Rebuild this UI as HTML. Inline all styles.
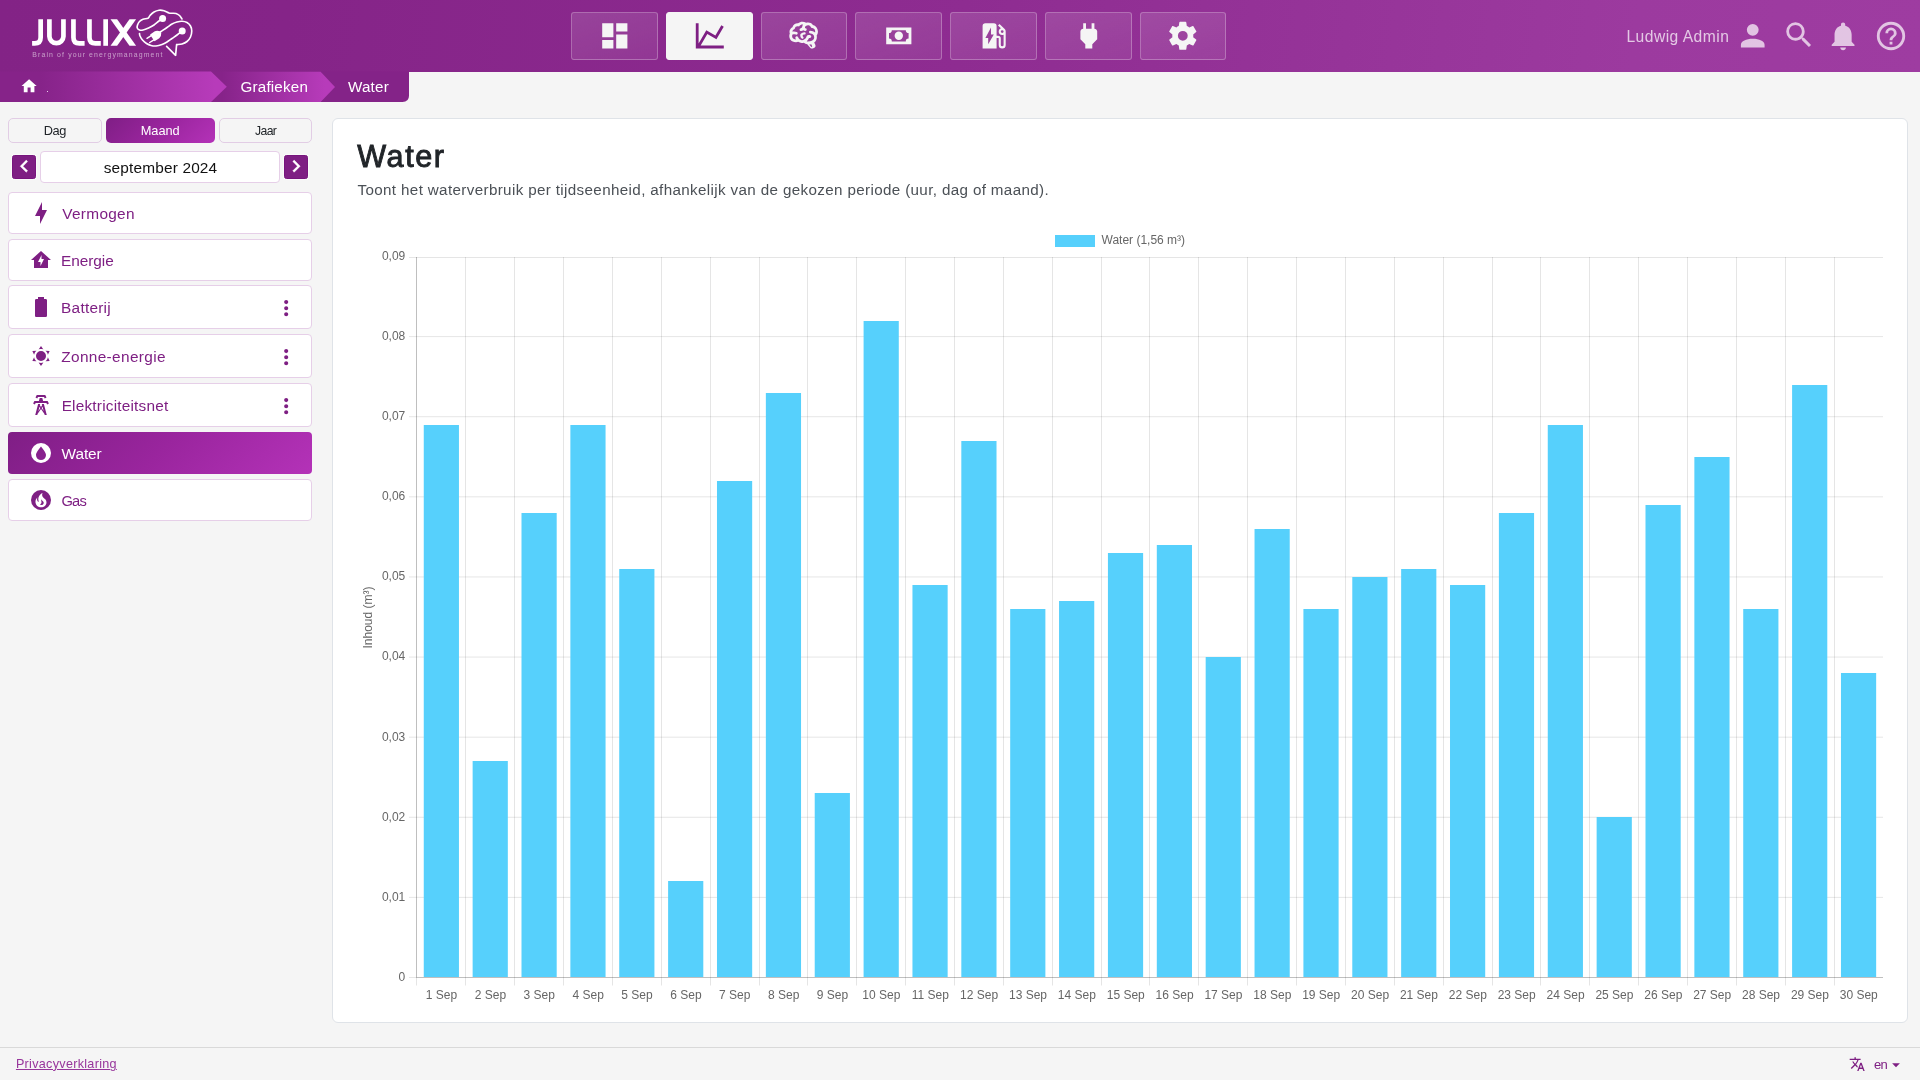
<!DOCTYPE html>
<html><head><meta charset="utf-8"><title>Water</title>
<style>
*{box-sizing:border-box;margin:0;padding:0}
html,body{width:1920px;height:1080px;overflow:hidden;background:#f5f5f5;font-family:"Liberation Sans",sans-serif;}
.abs{position:absolute}
svg{overflow:visible}
#hdr{position:absolute;left:0;top:0;width:1920px;height:72px;background:linear-gradient(97deg,#832386 0%,#852488 15%,#8e2c91 50%,#9c3a9f 85%,#9e3ca1 100%);}
.nb{position:absolute;top:12px;height:48px;border:1px solid rgba(255,255,255,0.25);border-radius:3px;background:linear-gradient(160deg,rgba(255,255,255,0.13),rgba(255,255,255,0.07));}
.nb.act{background:#f5f5f5;border-color:#f5f5f5}
.ct{font-family:"Liberation Sans",sans-serif;font-size:12px;fill:#666}
.tx{position:absolute;white-space:nowrap;line-height:1.149;}
.tb{position:absolute;top:118px;height:25px;border:1px solid #e2cde5;border-radius:5px;background:#f5f5f5;}
.mi{position:absolute;left:8px;width:304px;border:1px solid #e6cfe8;border-radius:4px;background:#fff;}
.mi.act{background:linear-gradient(135deg,#7f1e85 0%,#9a259e 50%,#b432b8 100%);border:0;}
</style></head><body>
<div id="hdr"></div>
<svg class="abs" style="left:0;top:0" width="220" height="72" viewBox="0 0 220 72">
<g fill="none" stroke="#fff" stroke-width="4.7">
<path d="M40.65,19.25 V37.5 Q40.65,43.45 34.7,43.45 H32.1"/>
<path d="M49.4,19.25 V36.4 A7.03,7.03 0 0 0 63.45,36.4 V19.25"/>
<path d="M73.45,19.25 V37.5 Q73.45,43.45 79.4,43.45 H84.6"/>
<path d="M89.45,19.25 V37.5 Q89.45,43.45 95.4,43.45 H100.8"/>
<path d="M105.65,19.25 V45.8"/>
</g>
<path fill="#fff" d="M110.5,19.25 H117.1 L136.1,45.8 H129.5Z"/><path fill="#fff" d="M136.1,19.25 H129.5 L110.5,45.8 H117.1Z"/>
<g fill="none" stroke="#fff" stroke-width="1.65" stroke-linecap="round" stroke-linejoin="round">
<path d="M162.50,18.50 C161.92,18.92 160.42,19.92 159.00,21.00 C157.58,22.08 155.75,23.83 154.00,25.00 C152.25,26.17 150.33,27.17 148.50,28.00 C146.67,28.83 144.50,29.67 143.00,30.00 C141.50,30.33 140.46,30.33 139.50,30.00 C138.54,29.67 137.58,28.83 137.25,28.00 C136.92,27.17 137.12,26.08 137.50,25.00 C137.88,23.92 138.58,22.46 139.50,21.50 C140.42,20.54 141.58,19.79 143.00,19.25 C144.42,18.71 146.83,18.88 148.00,18.25 C149.17,17.62 149.00,16.54 150.00,15.50 C151.00,14.46 152.50,12.88 154.00,12.00 C155.50,11.12 157.33,10.46 159.00,10.25 C160.67,10.04 162.33,10.29 164.00,10.75 C165.67,11.21 167.67,12.58 169.00,13.00 C170.33,13.42 170.83,13.17 172.00,13.25 C173.17,13.33 174.75,13.12 176.00,13.50 C177.25,13.88 178.50,14.58 179.50,15.50 C180.50,16.42 181.58,18.42 182.00,19.00"/>
<path d="M158.00,33.50 C158.50,33.17 159.50,32.50 161.00,31.50 C162.50,30.50 165.17,28.75 167.00,27.50 C168.83,26.25 170.33,24.92 172.00,24.00 C173.67,23.08 175.33,22.46 177.00,22.00 C178.67,21.54 180.33,21.17 182.00,21.25 C183.67,21.33 185.58,21.71 187.00,22.50 C188.42,23.29 189.71,24.58 190.50,26.00 C191.29,27.42 191.75,29.17 191.75,31.00 C191.75,32.83 191.29,35.25 190.50,37.00 C189.71,38.75 188.42,40.33 187.00,41.50 C185.58,42.67 183.67,43.48 182.00,44.00 C180.33,44.52 177.83,44.50 177.00,44.60"/>
<path d="M176.6,44.6 L175.6,55.3 L166.6,46.4"/>
<path d="M182.00,31.00 C181.17,31.67 178.67,33.75 177.00,35.00 C175.33,36.25 173.67,37.33 172.00,38.50 C170.33,39.67 168.67,41.00 167.00,42.00 C165.33,43.00 163.83,43.83 162.00,44.50 C160.17,45.17 157.83,45.83 156.00,46.00 C154.17,46.17 152.58,45.92 151.00,45.50 C149.42,45.08 147.92,44.42 146.50,43.50 C145.08,42.58 143.58,41.25 142.50,40.00 C141.42,38.75 140.50,37.08 140.00,36.00 C139.50,34.92 139.58,33.92 139.50,33.50"/>
</g>
<circle cx="162.6" cy="18.6" r="3.5" fill="#fff"/>
<circle cx="182.2" cy="31" r="3.5" fill="#fff"/>
<g transform="translate(156.4,35.2) rotate(-33)" fill="#fff" stroke="none">
<path d="M-4.4,-4.1 H0.8 Q3.6,-3.8 5.2,-0.9 V0.9 Q3.6,3.8 0.8,4.1 H-4.4 Q-5,4.1 -5,3.5 V-3.5 Q-5,-4.1 -4.4,-4.1Z"/>
<path d="M-4.6,-2.5 H-9.6 M-4.6,2.5 H-9.6" stroke="#fff" stroke-width="1.4" stroke-linecap="round"/>
</g>
</svg>
<div class="nb" style="left:571px;width:87px"></div>
<svg class="abs" style="left:597.70px;top:18.80px" width="33.6" height="33.6" viewBox="0 0 24 24"><path fill="#f5f5f5" fill-rule="evenodd" d="M3 13h8V3H3v10zm0 8h8v-6H3v6zm10 0h8V11h-8v10zm0-18v6h8V3h-8z"/></svg>
<div class="nb act" style="left:666px;width:87px"></div>
<svg class="abs" style="left:692.70px;top:18.80px" width="33.6" height="33.6" viewBox="0 0 24 24"><path fill="#7e1f83" fill-rule="evenodd" d="M16,11.78L20.24,4.45L21.97,5.45L16.74,14.5L10.23,10.75L5.46,19H22V21H2V3H4V17.54L9.5,8L16,11.78Z"/></svg>
<div class="nb" style="left:761px;width:86px"></div>
<svg class="abs" style="left:787.20px;top:18.80px" width="33.6" height="33.6" viewBox="0 0 24 24"><path fill="#f5f5f5" fill-rule="evenodd" d="M21.33,12.91C21.42,14.46 20.71,15.95 19.44,16.86L20.21,18.35C20.44,18.8 20.47,19.33 20.27,19.8C20.08,20.27 19.69,20.64 19.21,20.8L18.42,21.05C18.25,21.11 18.06,21.14 17.88,21.14C17.37,21.14 16.89,20.91 16.56,20.5L14.44,18C13.55,17.85 12.71,17.47 12,16.9C11.5,17.05 11,17.13 10.5,17.13C9.62,17.13 8.74,16.86 8,16.34C7.47,16.5 6.93,16.57 6.38,16.56C5.59,16.57 4.81,16.41 4.08,16.11C2.65,15.47 1.7,14.07 1.65,12.5C1.57,11.78 1.69,11.05 2,10.39C1.71,9.64 1.68,8.82 1.93,8.06C2.3,7.11 3,6.32 3.87,5.82C4.45,4.13 6.08,3 7.87,3.12C9.47,1.62 11.92,1.46 13.7,2.75C14.12,2.64 14.56,2.58 15,2.58C16.36,2.55 17.65,3.15 18.5,4.22C20.54,4.75 22,6.57 22.08,8.69C22.13,9.8 21.83,10.89 21.22,11.82C21.29,12.18 21.33,12.54 21.33,12.91M16.33,11.5C16.9,11.57 17.35,12 17.35,12.57A1,1 0 0,1 16.35,13.57H15.72C15.4,14.47 14.84,15.26 14.1,15.86C14.35,15.95 14.61,16 14.87,16.07C20,16 19.4,12.87 19.4,12.82C19.34,11.39 18.14,10.27 16.71,10.33A1,1 0 0,1 15.71,9.33A1,1 0 0,1 16.71,8.33C17.94,8.36 19.12,8.82 20.04,9.63C20.09,9.34 20.12,9.04 20.12,8.74C20.06,7.5 19.5,6.42 17.25,6.21C16,3.25 12.85,4.89 12.85,5.81V5.81C12.82,6.04 13.06,6.53 13.1,6.56A1,1 0 0,1 14.1,7.56C14.1,8.11 13.65,8.56 13.1,8.56V8.56C12.57,8.54 12.07,8.34 11.67,8C11.19,8.31 10.64,8.5 10.07,8.56V8.56C9.5,8.61 9.03,8.21 9,7.66C8.92,7.1 9.33,6.61 9.88,6.56C10.04,6.54 10.82,6.42 10.82,5.79V5.79C10.82,5.13 11.07,4.5 11.5,4C10.58,3.75 9.59,4.08 8.59,5.29C6.75,5 6,5.25 5.45,7.2C4.5,7.67 4,8 3.78,9C4.86,8.78 5.97,8.87 7,9.25C7.5,9.44 7.78,10 7.59,10.54C7.4,11.06 6.82,11.32 6.3,11.13C5.57,10.81 4.75,10.79 4,11.07C3.68,11.34 3.68,11.9 3.68,12.34C3.68,13.08 4.05,13.77 4.68,14.17C5.21,14.44 5.8,14.58 6.39,14.57C6.24,14.31 6.11,14.04 6,13.76C5.81,13.22 6.1,12.63 6.64,12.44C7.18,12.25 7.77,12.54 7.96,13.08C8.36,14.22 9.38,15 10.58,15.13C11.95,15.06 13.17,14.25 13.77,13C14,11.62 15.11,11.5 16.19,11.48M18,19.4L17.31,18C16.84,18.11 16.36,18.2 15.88,18.2L17.5,20.1L18,19.4Z"/><path d="M12.5,10.3 Q10.2,10.6 10.3,11.8 Q10.3,12.8 11,13.3" fill="none" stroke="#f5f5f5" stroke-width="1.7" stroke-linecap="round"/></svg>
<div class="nb" style="left:855px;width:87px"></div>
<svg class="abs" style="left:881.70px;top:18.80px" width="33.6" height="33.6" viewBox="0 0 24 24"><path fill="#f5f5f5" fill-rule="evenodd" d="M3,6H21V18H3V6M12,9A3,3 0 0,1 15,12A3,3 0 0,1 12,15A3,3 0 0,1 9,12A3,3 0 0,1 12,9M7,8A2,2 0 0,1 5,10V14A2,2 0 0,1 7,16H17A2,2 0 0,1 19,14V10A2,2 0 0,1 17,8H7Z"/></svg>
<div class="nb" style="left:950px;width:87px"></div>
<svg class="abs" style="left:976.70px;top:18.80px" width="33.6" height="33.6" viewBox="0 0 24 24"><path fill="#f5f5f5" fill-rule="evenodd" d="M19.77,7.23L19.78,7.22L16.06,3.5L15,4.56L17.11,6.67C16.17,7.03 15.5,7.93 15.5,9A2.5,2.5 0 0,0 18,11.5C18.36,11.5 18.69,11.42 19,11.29V18.5A1,1 0 0,1 18,19.5A1,1 0 0,1 17,18.5V14A2,2 0 0,0 15,12H14V5A2,2 0 0,0 12,3H6A2,2 0 0,0 4,5V21H14V13.5H15.5V18.5A2.5,2.5 0 0,0 18,21A2.5,2.5 0 0,0 20.5,18.5V9C20.5,8.31 20.22,7.68 19.77,7.23M18,10A1,1 0 0,1 17,9A1,1 0 0,1 18,8A1,1 0 0,1 19,9A1,1 0 0,1 18,10M8,18V13.5H6L10,6V11H12L8,18Z"/></svg>
<div class="nb" style="left:1045px;width:87px"></div>
<svg class="abs" style="left:1071.70px;top:18.80px" width="33.6" height="33.6" viewBox="0 0 24 24"><path fill="#f5f5f5" fill-rule="evenodd" d="M16,7V3H14V7H10V3H8V7H8C7,7 6,8 6,9V14.5L9.5,18V21H14.5V18L18,14.5V9C18,8 17,7 16,7Z"/></svg>
<div class="nb" style="left:1140px;width:86px"></div>
<svg class="abs" style="left:1166.20px;top:18.80px" width="33.6" height="33.6" viewBox="0 0 24 24"><path fill="#f5f5f5" fill-rule="evenodd" d="M12,15.5A3.5,3.5 0 0,1 8.5,12A3.5,3.5 0 0,1 12,8.5A3.5,3.5 0 0,1 15.5,12A3.5,3.5 0 0,1 12,15.5M19.43,12.97C19.47,12.65 19.5,12.33 19.5,12C19.5,11.67 19.47,11.34 19.43,11L21.54,9.37C21.73,9.22 21.78,8.95 21.66,8.73L19.66,5.27C19.54,5.05 19.27,4.96 19.05,5.05L16.56,6.05C16.04,5.66 15.5,5.32 14.87,5.07L14.5,2.42C14.46,2.18 14.25,2 14,2H10C9.75,2 9.54,2.18 9.5,2.42L9.13,5.07C8.5,5.32 7.96,5.66 7.44,6.05L4.95,5.05C4.73,4.96 4.46,5.05 4.34,5.27L2.34,8.73C2.21,8.95 2.27,9.22 2.46,9.37L4.57,11C4.53,11.34 4.5,11.67 4.5,12C4.5,12.33 4.53,12.65 4.57,12.97L2.46,14.63C2.27,14.78 2.21,15.05 2.34,15.27L4.34,18.73C4.46,18.95 4.73,19.03 4.95,18.95L7.44,17.94C7.96,18.34 8.5,18.68 9.13,18.93L9.5,21.58C9.54,21.82 9.75,22 10,22H14C14.25,22 14.46,21.82 14.5,21.58L14.87,18.93C15.5,18.67 16.04,18.34 16.56,17.94L19.05,18.95C19.27,19.03 19.54,18.95 19.66,18.73L21.66,15.27C21.78,15.05 21.73,14.78 21.54,14.63L19.43,12.97Z"/></svg>
<svg class="abs" style="left:1734.80px;top:17.65px" width="35.5" height="35.5" viewBox="0 0 24 24"><path fill="rgba(255,255,255,0.7)" fill-rule="evenodd" d="M12,4A4,4 0 0,1 16,8A4,4 0 0,1 12,12A4,4 0 0,1 8,8A4,4 0 0,1 12,4M12,14C16.42,14 20,15.79 20,18V20H4V18C4,15.79 7.58,14 12,14Z"/></svg>
<svg class="abs" style="left:1781.95px;top:17.70px" width="34" height="34" viewBox="0 0 24 24"><path fill="rgba(255,255,255,0.7)" fill-rule="evenodd" d="M9.5,3A6.5,6.5 0 0,1 16,9.5C16,11.11 15.41,12.59 14.44,13.73L14.71,14H15.5L20.5,19L19,20.5L14,15.5V14.71L13.73,14.44C12.59,15.41 11.11,16 9.5,16A6.5,6.5 0 0,1 3,9.5A6.5,6.5 0 0,1 9.5,3M9.5,5C7,5 5,7 5,9.5C5,12 7,14 9.5,14C12,14 14,12 14,9.5C14,7 12,5 9.5,5Z"/></svg>
<svg class="abs" style="left:1826.00px;top:18.90px" width="34.2" height="34.2" viewBox="0 0 24 24"><path fill="rgba(255,255,255,0.7)" fill-rule="evenodd" d="M12 22c1.1 0 2-.9 2-2h-4c0 1.1.89 2 2 2zm6-6v-5c0-3.07-1.64-5.64-4.5-6.32V4c0-.83-.67-1.5-1.5-1.5s-1.5.67-1.5 1.5v.68C7.63 5.36 6 7.92 6 11v5l-2 2v1h16v-1l-2-2z"/></svg>
<svg class="abs" style="left:1874.00px;top:18.90px" width="34" height="34" viewBox="0 0 24 24"><path fill="rgba(255,255,255,0.7)" fill-rule="evenodd" d="M11,18H13V16H11V18M12,2A10,10 0 0,0 2,12A10,10 0 0,0 12,22A10,10 0 0,0 22,12A10,10 0 0,0 12,2M12,20C7.59,20 4,16.41 4,12C4,7.59 7.59,4 12,4C16.41,4 20,7.59 20,12C20,16.41 16.41,20 12,20M12,6A4,4 0 0,0 8,10H10A2,2 0 0,1 12,8A2,2 0 0,1 14,10C14,12 11,11.75 11,15H13C13,12.75 16,12.5 16,10A4,4 0 0,0 12,6Z"/></svg>
<svg class="abs" style="left:0;top:71px" width="420" height="32" viewBox="0 71 420 32">
<defs>
<linearGradient id="g1" gradientUnits="userSpaceOnUse" x1="40" y1="0" x2="215" y2="0"><stop offset="0" stop-color="#862389"/><stop offset="1" stop-color="#b73bba"/></linearGradient>
<linearGradient id="g2" gradientUnits="userSpaceOnUse" x1="222" y1="0" x2="325" y2="0"><stop offset="0" stop-color="#862389"/><stop offset="1" stop-color="#b73bba"/></linearGradient>
</defs>
<path d="M320,71.8 H409 V95.5 Q409,102 402.5,102 H320Z" fill="#842388"/>
<path d="M205,71.8 H320.6 L335,86.9 L320.6,102 H205Z" fill="url(#g2)"/>
<path d="M0,71.4 H211 L226.8,86.7 L211,102 H0Z" fill="url(#g1)"/>
<rect x="47" y="91" width="1" height="1" fill="#e9cfea"/>
</svg>
<svg class="abs" style="left:20.40px;top:77.20px" width="18.2" height="18.2" viewBox="0 0 24 24"><path fill="#fff" fill-rule="evenodd" d="M10 20v-6h4v6h5v-8h3L12 3 2 12h3v8z"/></svg>
<div class="tb" style="left:8px;width:94px"></div>
<div class="tb" style="left:106px;width:109px;background:linear-gradient(135deg,#7f1e85 0%,#9a259e 50%,#b432b8 100%);border:0"></div>
<div class="tb" style="left:219px;width:93px"></div>
<div class="abs" style="left:12px;top:155px;width:24px;height:24px;border-radius:2.5px;background:#7e1f83;border:1px solid #77157d;box-shadow:0 0 0 1px #fafbfa"></div><svg class="abs" style="left:11.8px;top:154.3px" width="24.4" height="24.4" viewBox="0 0 24 24"><path fill="#fff" stroke="#fff" stroke-width="0.35" d="M15.41 7.41L14 6l-6 6 6 6 1.41-1.41L10.83 12z"/></svg>
<div class="abs" style="left:284px;top:155px;width:24px;height:24px;border-radius:2.5px;background:#7e1f83;border:1px solid #77157d;box-shadow:0 0 0 1px #fafbfa"></div><svg class="abs" style="left:283.8px;top:154.3px" width="24.4" height="24.4" viewBox="0 0 24 24"><path fill="#fff" stroke="#fff" stroke-width="0.35" d="M10 6L8.59 7.41 13.17 12l-4.58 4.59L10 18l6-6z"/></svg>
<div class="abs" style="left:40px;top:151px;width:240px;height:32px;background:#fff;border:1px solid #e6cfe8;border-radius:4px"></div>
<div class="mi" style="top:192.0px;height:42.0px"></div>
<svg class="abs" style="left:28.60px;top:201.00px" width="24" height="24" viewBox="0 0 24 24"><path fill="#7e1f83" fill-rule="evenodd" d="M11,15H6L13,1V9H18L11,23V15Z"/></svg>
<div class="mi" style="top:239.0px;height:42.0px"></div>
<svg class="abs" style="left:29.00px;top:247.90px" width="24" height="24" viewBox="0 0 24 24"><path fill="#7e1f83" fill-rule="evenodd" d="M12 3L2 12H5V20H19V12H22L12 3M11.5 18V14H9L12.5 7V11H15L11.5 18Z"/></svg>
<div class="mi" style="top:285.0px;height:44.0px"></div>
<svg class="abs" style="left:29.00px;top:294.90px" width="24" height="24" viewBox="0 0 24 24"><path fill="#7e1f83" fill-rule="evenodd" d="M16.67,4H15V2H9V4H7.33A1.33,1.33 0 0,0 6,5.33V20.67C6,21.4 6.6,22 7.33,22H16.67A1.33,1.33 0 0,0 18,20.67V5.33C18,4.6 17.4,4 16.67,4Z"/></svg>
<svg class="abs" style="left:273.60px;top:295.70px" width="24.4" height="24.4" viewBox="0 0 24 24"><path fill="#7e1f83" fill-rule="evenodd" d="M12 8c1.1 0 2-.9 2-2s-.9-2-2-2-2 .9-2 2 .9 2 2 2zm0 2c-1.1 0-2 .9-2 2s.9 2 2 2 2-.9 2-2-.9-2-2-2zm0 6c-1.1 0-2 .9-2 2s.9 2 2 2 2-.9 2-2-.9-2-2-2z"/></svg>
<div class="mi" style="top:334.0px;height:44.0px"></div>
<svg class="abs" style="left:28.80px;top:344.00px" width="24" height="24" viewBox="0 0 24 24"><path fill="#7e1f83" fill-rule="evenodd" d="M12,7A5,5 0 0,1 17,12A5,5 0 0,1 12,17A5,5 0 0,1 7,12A5,5 0 0,1 12,7M12,2L14.39,5.42C13.65,5.15 12.84,5 12,5C11.16,5 10.35,5.15 9.61,5.42L12,2M3.34,7L7.5,6.65C6.9,7.16 6.36,7.78 5.94,8.5C5.5,9.24 5.25,10 5.11,10.79L3.34,7M3.36,17L5.12,13.23C5.26,14 5.53,14.78 5.95,15.5C6.37,16.24 6.91,16.86 7.5,17.37L3.36,17M20.65,7L18.88,10.79C18.74,10 18.47,9.23 18.05,8.5C17.63,7.78 17.1,7.15 16.5,6.64L20.65,7M20.64,17L16.5,17.36C17.09,16.85 17.62,16.22 18.04,15.5C18.46,14.77 18.73,14 18.87,13.21L20.64,17M12,22L9.59,18.56C10.33,18.83 11.14,19 12,19C12.82,19 13.63,18.83 14.37,18.56L12,22Z"/></svg>
<svg class="abs" style="left:273.60px;top:344.70px" width="24.4" height="24.4" viewBox="0 0 24 24"><path fill="#7e1f83" fill-rule="evenodd" d="M12 8c1.1 0 2-.9 2-2s-.9-2-2-2-2 .9-2 2 .9 2 2 2zm0 2c-1.1 0-2 .9-2 2s.9 2 2 2 2-.9 2-2-.9-2-2-2zm0 6c-1.1 0-2 .9-2 2s.9 2 2 2 2-.9 2-2-.9-2-2-2z"/></svg>
<div class="mi" style="top:383.0px;height:44.0px"></div>
<svg class="abs" style="left:29.20px;top:393.00px" width="24" height="24" viewBox="0 0 24 24"><path fill="#7e1f83" fill-rule="evenodd" d="M8.28,5.45L6.5,4.55L7.76,2H16.23L17.5,4.55L15.72,5.44L15,4H9L8.28,5.45M18.62,8H14.09L13.3,5H10.7L9.91,8H5.38L4.1,10.55L5.89,11.44L6.62,10H17.38L18.1,11.45L19.89,10.56L18.62,8M17.77,22H15.7L15.46,21.1L12,15.9L8.53,21.1L8.3,22H6.23L9.12,11H11.19L10.83,12.35L12,14.1L13.16,12.35L12.81,11H14.88L17.77,22M11.4,15L10.5,13.65L9.32,18.13L11.4,15M14.68,18.12L13.5,13.64L12.6,15L14.68,18.12Z"/></svg>
<svg class="abs" style="left:273.60px;top:393.70px" width="24.4" height="24.4" viewBox="0 0 24 24"><path fill="#7e1f83" fill-rule="evenodd" d="M12 8c1.1 0 2-.9 2-2s-.9-2-2-2-2 .9-2 2 .9 2 2 2zm0 2c-1.1 0-2 .9-2 2s.9 2 2 2 2-.9 2-2-.9-2-2-2zm0 6c-1.1 0-2 .9-2 2s.9 2 2 2 2-.9 2-2-.9-2-2-2z"/></svg>
<div class="mi act" style="top:432.0px;height:42.0px"></div>
<svg class="abs" style="left:28.95px;top:440.95px" width="24" height="24" viewBox="0 0 24 24"><path fill="#fff" fill-rule="evenodd" d="M12,2A10,10 0 1,0 12,22A10,10 0 1,0 12,2ZM12,5.5C12,5.5 7,11.1 7,14.1A5,5 0 0,0 17,14.1C17,11.1 12,5.5 12,5.5Z"/></svg>
<div class="mi" style="top:479.0px;height:42.0px"></div>
<svg class="abs" style="left:28.95px;top:488.00px" width="24" height="24" viewBox="0 0 24 24"><circle cx="12" cy="12" r="10" fill="#7e1f83"/><g transform="translate(12,12.2) scale(0.79) translate(-12,-12)"><path fill="#fff" fill-rule="evenodd" d="M17.66 11.2C17.43 10.9 17.15 10.64 16.89 10.38C16.22 9.78 15.46 9.35 14.82 8.72C13.33 7.26 13 4.85 13.95 3C13 3.23 12.17 3.75 11.46 4.32C8.87 6.4 7.85 10.07 9.07 13.22C9.11 13.32 9.15 13.42 9.15 13.55C9.15 13.77 9 13.97 8.8 14.05C8.57 14.15 8.33 14.09 8.14 13.93C8.08 13.88 8.04 13.83 8 13.76C6.87 12.33 6.69 10.28 7.45 8.64C5.78 10 4.87 12.3 5 14.47C5.06 14.97 5.12 15.47 5.29 15.97C5.43 16.57 5.7 17.17 6 17.7C7.08 19.43 8.95 20.67 10.96 20.92C13.1 21.19 15.39 20.8 17.03 19.32C18.86 17.66 19.5 15 18.56 12.72L18.43 12.46C18.22 12 17.66 11.2 17.66 11.2M14.5 17.5C14.22 17.74 13.76 18 13.4 18.1C12.28 18.5 11.16 17.94 10.5 17.28C11.69 17 12.4 16.12 12.61 15.23C12.78 14.43 12.46 13.77 12.33 13C12.21 12.26 12.23 11.63 12.5 10.94C12.69 11.32 12.89 11.7 13.13 12C13.9 13 15.11 13.44 15.37 14.8C15.41 14.94 15.43 15.08 15.43 15.23C15.46 16.05 15.1 16.95 14.5 17.5H14.5Z"/></g></svg>
<div class="abs" style="left:332px;top:118px;width:1576px;height:905px;background:#fff;border:1px solid #dfe3e8;border-radius:6px"></div>
<svg class="abs" style="left:0;top:0;will-change:transform" width="1920" height="1080" viewBox="0 0 1920 1080">
<line x1="409" y1="977.5" x2="416" y2="977.5" stroke="rgba(0,0,0,0.1)"/>
<line x1="416" y1="977.5" x2="1883.0" y2="977.5" stroke="rgba(0,0,0,0.25)"/>
<line x1="409" y1="897.39" x2="416" y2="897.39" stroke="rgba(0,0,0,0.1)"/>
<line x1="416" y1="897.39" x2="1883.0" y2="897.39" stroke="rgba(0,0,0,0.1)"/>
<line x1="409" y1="817.28" x2="416" y2="817.28" stroke="rgba(0,0,0,0.1)"/>
<line x1="416" y1="817.28" x2="1883.0" y2="817.28" stroke="rgba(0,0,0,0.1)"/>
<line x1="409" y1="737.17" x2="416" y2="737.17" stroke="rgba(0,0,0,0.1)"/>
<line x1="416" y1="737.17" x2="1883.0" y2="737.17" stroke="rgba(0,0,0,0.1)"/>
<line x1="409" y1="657.06" x2="416" y2="657.06" stroke="rgba(0,0,0,0.1)"/>
<line x1="416" y1="657.06" x2="1883.0" y2="657.06" stroke="rgba(0,0,0,0.1)"/>
<line x1="409" y1="576.95" x2="416" y2="576.95" stroke="rgba(0,0,0,0.1)"/>
<line x1="416" y1="576.95" x2="1883.0" y2="576.95" stroke="rgba(0,0,0,0.1)"/>
<line x1="409" y1="496.84" x2="416" y2="496.84" stroke="rgba(0,0,0,0.1)"/>
<line x1="416" y1="496.84" x2="1883.0" y2="496.84" stroke="rgba(0,0,0,0.1)"/>
<line x1="409" y1="416.73" x2="416" y2="416.73" stroke="rgba(0,0,0,0.1)"/>
<line x1="416" y1="416.73" x2="1883.0" y2="416.73" stroke="rgba(0,0,0,0.1)"/>
<line x1="409" y1="336.62" x2="416" y2="336.62" stroke="rgba(0,0,0,0.1)"/>
<line x1="416" y1="336.62" x2="1883.0" y2="336.62" stroke="rgba(0,0,0,0.1)"/>
<line x1="409" y1="257.5" x2="416" y2="257.5" stroke="rgba(0,0,0,0.1)"/>
<line x1="416" y1="257.5" x2="1883.0" y2="257.5" stroke="rgba(0,0,0,0.1)"/>
<line x1="416.5" y1="257.0" x2="416.5" y2="977.0" stroke="rgba(0,0,0,0.25)"/>
<line x1="416.5" y1="977.0" x2="416.5" y2="985.5" stroke="rgba(0,0,0,0.1)"/>
<line x1="465.5" y1="257.0" x2="465.5" y2="977.0" stroke="rgba(0,0,0,0.1)"/>
<line x1="465.5" y1="977.0" x2="465.5" y2="985.5" stroke="rgba(0,0,0,0.1)"/>
<line x1="514.5" y1="257.0" x2="514.5" y2="977.0" stroke="rgba(0,0,0,0.1)"/>
<line x1="514.5" y1="977.0" x2="514.5" y2="985.5" stroke="rgba(0,0,0,0.1)"/>
<line x1="563.5" y1="257.0" x2="563.5" y2="977.0" stroke="rgba(0,0,0,0.1)"/>
<line x1="563.5" y1="977.0" x2="563.5" y2="985.5" stroke="rgba(0,0,0,0.1)"/>
<line x1="612.5" y1="257.0" x2="612.5" y2="977.0" stroke="rgba(0,0,0,0.1)"/>
<line x1="612.5" y1="977.0" x2="612.5" y2="985.5" stroke="rgba(0,0,0,0.1)"/>
<line x1="661.5" y1="257.0" x2="661.5" y2="977.0" stroke="rgba(0,0,0,0.1)"/>
<line x1="661.5" y1="977.0" x2="661.5" y2="985.5" stroke="rgba(0,0,0,0.1)"/>
<line x1="710.5" y1="257.0" x2="710.5" y2="977.0" stroke="rgba(0,0,0,0.1)"/>
<line x1="710.5" y1="977.0" x2="710.5" y2="985.5" stroke="rgba(0,0,0,0.1)"/>
<line x1="759.5" y1="257.0" x2="759.5" y2="977.0" stroke="rgba(0,0,0,0.1)"/>
<line x1="759.5" y1="977.0" x2="759.5" y2="985.5" stroke="rgba(0,0,0,0.1)"/>
<line x1="807.5" y1="257.0" x2="807.5" y2="977.0" stroke="rgba(0,0,0,0.1)"/>
<line x1="807.5" y1="977.0" x2="807.5" y2="985.5" stroke="rgba(0,0,0,0.1)"/>
<line x1="856.5" y1="257.0" x2="856.5" y2="977.0" stroke="rgba(0,0,0,0.1)"/>
<line x1="856.5" y1="977.0" x2="856.5" y2="985.5" stroke="rgba(0,0,0,0.1)"/>
<line x1="905.5" y1="257.0" x2="905.5" y2="977.0" stroke="rgba(0,0,0,0.1)"/>
<line x1="905.5" y1="977.0" x2="905.5" y2="985.5" stroke="rgba(0,0,0,0.1)"/>
<line x1="954.5" y1="257.0" x2="954.5" y2="977.0" stroke="rgba(0,0,0,0.1)"/>
<line x1="954.5" y1="977.0" x2="954.5" y2="985.5" stroke="rgba(0,0,0,0.1)"/>
<line x1="1003.5" y1="257.0" x2="1003.5" y2="977.0" stroke="rgba(0,0,0,0.1)"/>
<line x1="1003.5" y1="977.0" x2="1003.5" y2="985.5" stroke="rgba(0,0,0,0.1)"/>
<line x1="1052.5" y1="257.0" x2="1052.5" y2="977.0" stroke="rgba(0,0,0,0.1)"/>
<line x1="1052.5" y1="977.0" x2="1052.5" y2="985.5" stroke="rgba(0,0,0,0.1)"/>
<line x1="1101.5" y1="257.0" x2="1101.5" y2="977.0" stroke="rgba(0,0,0,0.1)"/>
<line x1="1101.5" y1="977.0" x2="1101.5" y2="985.5" stroke="rgba(0,0,0,0.1)"/>
<line x1="1149.5" y1="257.0" x2="1149.5" y2="977.0" stroke="rgba(0,0,0,0.1)"/>
<line x1="1149.5" y1="977.0" x2="1149.5" y2="985.5" stroke="rgba(0,0,0,0.1)"/>
<line x1="1198.5" y1="257.0" x2="1198.5" y2="977.0" stroke="rgba(0,0,0,0.1)"/>
<line x1="1198.5" y1="977.0" x2="1198.5" y2="985.5" stroke="rgba(0,0,0,0.1)"/>
<line x1="1247.5" y1="257.0" x2="1247.5" y2="977.0" stroke="rgba(0,0,0,0.1)"/>
<line x1="1247.5" y1="977.0" x2="1247.5" y2="985.5" stroke="rgba(0,0,0,0.1)"/>
<line x1="1296.5" y1="257.0" x2="1296.5" y2="977.0" stroke="rgba(0,0,0,0.1)"/>
<line x1="1296.5" y1="977.0" x2="1296.5" y2="985.5" stroke="rgba(0,0,0,0.1)"/>
<line x1="1345.5" y1="257.0" x2="1345.5" y2="977.0" stroke="rgba(0,0,0,0.1)"/>
<line x1="1345.5" y1="977.0" x2="1345.5" y2="985.5" stroke="rgba(0,0,0,0.1)"/>
<line x1="1394.5" y1="257.0" x2="1394.5" y2="977.0" stroke="rgba(0,0,0,0.1)"/>
<line x1="1394.5" y1="977.0" x2="1394.5" y2="985.5" stroke="rgba(0,0,0,0.1)"/>
<line x1="1443.5" y1="257.0" x2="1443.5" y2="977.0" stroke="rgba(0,0,0,0.1)"/>
<line x1="1443.5" y1="977.0" x2="1443.5" y2="985.5" stroke="rgba(0,0,0,0.1)"/>
<line x1="1492.5" y1="257.0" x2="1492.5" y2="977.0" stroke="rgba(0,0,0,0.1)"/>
<line x1="1492.5" y1="977.0" x2="1492.5" y2="985.5" stroke="rgba(0,0,0,0.1)"/>
<line x1="1540.5" y1="257.0" x2="1540.5" y2="977.0" stroke="rgba(0,0,0,0.1)"/>
<line x1="1540.5" y1="977.0" x2="1540.5" y2="985.5" stroke="rgba(0,0,0,0.1)"/>
<line x1="1589.5" y1="257.0" x2="1589.5" y2="977.0" stroke="rgba(0,0,0,0.1)"/>
<line x1="1589.5" y1="977.0" x2="1589.5" y2="985.5" stroke="rgba(0,0,0,0.1)"/>
<line x1="1638.5" y1="257.0" x2="1638.5" y2="977.0" stroke="rgba(0,0,0,0.1)"/>
<line x1="1638.5" y1="977.0" x2="1638.5" y2="985.5" stroke="rgba(0,0,0,0.1)"/>
<line x1="1687.5" y1="257.0" x2="1687.5" y2="977.0" stroke="rgba(0,0,0,0.1)"/>
<line x1="1687.5" y1="977.0" x2="1687.5" y2="985.5" stroke="rgba(0,0,0,0.1)"/>
<line x1="1736.5" y1="257.0" x2="1736.5" y2="977.0" stroke="rgba(0,0,0,0.1)"/>
<line x1="1736.5" y1="977.0" x2="1736.5" y2="985.5" stroke="rgba(0,0,0,0.1)"/>
<line x1="1785.5" y1="257.0" x2="1785.5" y2="977.0" stroke="rgba(0,0,0,0.1)"/>
<line x1="1785.5" y1="977.0" x2="1785.5" y2="985.5" stroke="rgba(0,0,0,0.1)"/>
<line x1="1834.5" y1="257.0" x2="1834.5" y2="977.0" stroke="rgba(0,0,0,0.1)"/>
<line x1="1834.5" y1="977.0" x2="1834.5" y2="985.5" stroke="rgba(0,0,0,0.1)"/>
<rect x="423.76" y="425.00" width="35.19" height="552.00" fill="#56d0fc"/>
<rect x="472.63" y="761.00" width="35.19" height="216.00" fill="#56d0fc"/>
<rect x="521.50" y="513.00" width="35.19" height="464.00" fill="#56d0fc"/>
<rect x="570.37" y="425.00" width="35.19" height="552.00" fill="#56d0fc"/>
<rect x="619.24" y="569.00" width="35.19" height="408.00" fill="#56d0fc"/>
<rect x="668.11" y="881.00" width="35.19" height="96.00" fill="#56d0fc"/>
<rect x="716.98" y="481.00" width="35.19" height="496.00" fill="#56d0fc"/>
<rect x="765.85" y="393.00" width="35.19" height="584.00" fill="#56d0fc"/>
<rect x="814.72" y="793.00" width="35.19" height="184.00" fill="#56d0fc"/>
<rect x="863.59" y="321.00" width="35.19" height="656.00" fill="#56d0fc"/>
<rect x="912.46" y="585.00" width="35.19" height="392.00" fill="#56d0fc"/>
<rect x="961.32" y="441.00" width="35.19" height="536.00" fill="#56d0fc"/>
<rect x="1010.19" y="609.00" width="35.19" height="368.00" fill="#56d0fc"/>
<rect x="1059.06" y="601.00" width="35.19" height="376.00" fill="#56d0fc"/>
<rect x="1107.93" y="553.00" width="35.19" height="424.00" fill="#56d0fc"/>
<rect x="1156.80" y="545.00" width="35.19" height="432.00" fill="#56d0fc"/>
<rect x="1205.67" y="657.00" width="35.19" height="320.00" fill="#56d0fc"/>
<rect x="1254.54" y="529.00" width="35.19" height="448.00" fill="#56d0fc"/>
<rect x="1303.41" y="609.00" width="35.19" height="368.00" fill="#56d0fc"/>
<rect x="1352.28" y="577.00" width="35.19" height="400.00" fill="#56d0fc"/>
<rect x="1401.15" y="569.00" width="35.19" height="408.00" fill="#56d0fc"/>
<rect x="1450.02" y="585.00" width="35.19" height="392.00" fill="#56d0fc"/>
<rect x="1498.89" y="513.00" width="35.19" height="464.00" fill="#56d0fc"/>
<rect x="1547.76" y="425.00" width="35.19" height="552.00" fill="#56d0fc"/>
<rect x="1596.63" y="817.00" width="35.19" height="160.00" fill="#56d0fc"/>
<rect x="1645.50" y="505.00" width="35.19" height="472.00" fill="#56d0fc"/>
<rect x="1694.36" y="457.00" width="35.19" height="520.00" fill="#56d0fc"/>
<rect x="1743.23" y="609.00" width="35.19" height="368.00" fill="#56d0fc"/>
<rect x="1792.10" y="385.00" width="35.19" height="592.00" fill="#56d0fc"/>
<rect x="1840.97" y="673.00" width="35.19" height="304.00" fill="#56d0fc"/>
<text x="405.3" y="980.90" text-anchor="end" class="ct">0</text>
<text x="405.3" y="900.79" text-anchor="end" class="ct">0,01</text>
<text x="405.3" y="820.68" text-anchor="end" class="ct">0,02</text>
<text x="405.3" y="740.57" text-anchor="end" class="ct">0,03</text>
<text x="405.3" y="660.46" text-anchor="end" class="ct">0,04</text>
<text x="405.3" y="580.35" text-anchor="end" class="ct">0,05</text>
<text x="405.3" y="500.24" text-anchor="end" class="ct">0,06</text>
<text x="405.3" y="420.13" text-anchor="end" class="ct">0,07</text>
<text x="405.3" y="340.02" text-anchor="end" class="ct">0,08</text>
<text x="405.3" y="259.91" text-anchor="end" class="ct">0,09</text>
<text x="441.55" y="998.9" text-anchor="middle" class="ct">1 Sep</text>
<text x="490.42" y="998.9" text-anchor="middle" class="ct">2 Sep</text>
<text x="539.29" y="998.9" text-anchor="middle" class="ct">3 Sep</text>
<text x="588.16" y="998.9" text-anchor="middle" class="ct">4 Sep</text>
<text x="637.03" y="998.9" text-anchor="middle" class="ct">5 Sep</text>
<text x="685.90" y="998.9" text-anchor="middle" class="ct">6 Sep</text>
<text x="734.77" y="998.9" text-anchor="middle" class="ct">7 Sep</text>
<text x="783.64" y="998.9" text-anchor="middle" class="ct">8 Sep</text>
<text x="832.51" y="998.9" text-anchor="middle" class="ct">9 Sep</text>
<text x="881.38" y="998.9" text-anchor="middle" class="ct">10 Sep</text>
<text x="930.25" y="998.9" text-anchor="middle" class="ct">11 Sep</text>
<text x="979.12" y="998.9" text-anchor="middle" class="ct">12 Sep</text>
<text x="1027.99" y="998.9" text-anchor="middle" class="ct">13 Sep</text>
<text x="1076.86" y="998.9" text-anchor="middle" class="ct">14 Sep</text>
<text x="1125.73" y="998.9" text-anchor="middle" class="ct">15 Sep</text>
<text x="1174.59" y="998.9" text-anchor="middle" class="ct">16 Sep</text>
<text x="1223.46" y="998.9" text-anchor="middle" class="ct">17 Sep</text>
<text x="1272.33" y="998.9" text-anchor="middle" class="ct">18 Sep</text>
<text x="1321.20" y="998.9" text-anchor="middle" class="ct">19 Sep</text>
<text x="1370.07" y="998.9" text-anchor="middle" class="ct">20 Sep</text>
<text x="1418.94" y="998.9" text-anchor="middle" class="ct">21 Sep</text>
<text x="1467.81" y="998.9" text-anchor="middle" class="ct">22 Sep</text>
<text x="1516.68" y="998.9" text-anchor="middle" class="ct">23 Sep</text>
<text x="1565.55" y="998.9" text-anchor="middle" class="ct">24 Sep</text>
<text x="1614.42" y="998.9" text-anchor="middle" class="ct">25 Sep</text>
<text x="1663.29" y="998.9" text-anchor="middle" class="ct">26 Sep</text>
<text x="1712.16" y="998.9" text-anchor="middle" class="ct">27 Sep</text>
<text x="1761.03" y="998.9" text-anchor="middle" class="ct">28 Sep</text>
<text x="1809.90" y="998.9" text-anchor="middle" class="ct">29 Sep</text>
<text x="1858.77" y="998.9" text-anchor="middle" class="ct">30 Sep</text>
<rect x="1055" y="235" width="40" height="12" fill="#56d0fc"/>
<text x="1101.5" y="244.2" class="ct">Water (1,56 m³)</text>
<text transform="translate(372,617.5) rotate(-90)" text-anchor="middle" class="ct">Inhoud (m³)</text>
</svg>
<div id="user" class="tx" style="left:1626.40px;top:27.98px;font-size:15.6px;color:rgba(255,255,255,0.72);letter-spacing:0.491px;">Ludwig Admin</div>
<div id="bc1" class="tx" style="left:240.60px;top:77.84px;font-size:15.2px;color:#fff;letter-spacing:0.174px;">Grafieken</div>
<div id="bc2" class="tx" style="left:347.90px;top:77.84px;font-size:15.2px;color:#fff;letter-spacing:0.214px;">Water</div>
<div id="dag" class="tx" style="left:43.70px;top:123.72px;font-size:12.8px;color:#212529;letter-spacing:-0.360px;">Dag</div>
<div id="maand" class="tx" style="left:140.67px;top:123.72px;font-size:12.8px;color:#fff;letter-spacing:-0.023px;">Maand</div>
<div id="jaar" class="tx" style="left:255.00px;top:124.26px;font-size:12.2px;color:#212529;letter-spacing:-0.615px;">Jaar</div>
<div id="date" class="tx" style="left:103.70px;top:158.76px;font-size:15.4px;color:#111;letter-spacing:0.173px;">september 2024</div>
<div id="m1" class="tx" style="left:62.33px;top:204.86px;font-size:15.4px;color:#7e1f83;letter-spacing:0.283px;">Vermogen</div>
<div id="m2" class="tx" style="left:61.10px;top:252.06px;font-size:15.4px;color:#7e1f83;letter-spacing:-0.075px;">Energie</div>
<div id="m3" class="tx" style="left:61.10px;top:299.16px;font-size:15.4px;color:#7e1f83;letter-spacing:0.231px;">Batterij</div>
<div id="m4" class="tx" style="left:61.25px;top:347.86px;font-size:15.4px;color:#7e1f83;letter-spacing:0.346px;">Zonne-energie</div>
<div id="m5" class="tx" style="left:61.67px;top:396.76px;font-size:15.4px;color:#7e1f83;letter-spacing:0.194px;">Elektriciteitsnet</div>
<div id="m6" class="tx" style="left:61.50px;top:445.16px;font-size:15.4px;color:#fff;letter-spacing:-0.068px;">Water</div>
<div id="m7" class="tx" style="left:61.50px;top:492.70px;font-size:14.7px;color:#7e1f83;letter-spacing:-0.844px;">Gas</div>
<div id="ttl" class="tx" style="left:357.30px;top:139.24px;font-size:30.6px;color:#212529;letter-spacing:1.550px;-webkit-text-stroke:0.9px #212529;">Water</div>
<div id="desc" class="tx" style="left:357.50px;top:180.99px;font-size:15.2px;color:#4b5056;letter-spacing:0.358px;">Toont het waterverbruik per tijdseenheid, afhankelijk van de gekozen periode (uur, dag of maand).</div>
<div id="priv" class="tx" style="left:15.93px;top:1057.08px;font-size:12.6px;color:#97359b;letter-spacing:0.297px;text-decoration:underline;text-underline-offset:1.2px;text-decoration-thickness:1px;">Privacyverklaring</div>
<div id="lang" class="tx" style="left:1874.00px;top:1057.88px;font-size:13px;color:#7e1f83;letter-spacing:-0.650px;">en</div>
<div id="tag" class="tx" style="left:32.30px;top:51.18px;font-size:6.9px;color:rgba(255,255,255,0.55);letter-spacing:1.131px;">Brain of your energymanagment</div>
<div class="abs" style="left:0;top:1047px;width:1920px;height:1px;background:#d9d9d9"></div>
<svg class="abs" style="left:1848.70px;top:1055.70px" width="16.4" height="16.4" viewBox="0 0 24 24"><path fill="#7e1f83" fill-rule="evenodd" d="M12.87 15.07l-2.54-2.51.03-.03c1.74-1.94 2.98-4.17 3.71-6.53H17V4h-7V2H8v2H1v1.99h11.17C11.5 7.92 10.44 9.75 9 11.35 8.07 10.32 7.3 9.19 6.69 8h-2c.73 1.63 1.73 3.17 2.98 4.56l-5.09 5.02L4 19l5-5 3.11 3.11.76-2.04zM18.5 10h-2L12 22h2l1.12-3h4.75L21 22h2l-4.5-12zm-2.62 7l1.62-4.33L19.12 17h-3.24z"/></svg>
<svg class="abs" style="left:1892px;top:1063px" width="8" height="5" viewBox="0 0 8 5"><path d="M0.1,0.2 H7.9 L4,4.2Z" fill="#7e1f83"/></svg>
</body></html>
